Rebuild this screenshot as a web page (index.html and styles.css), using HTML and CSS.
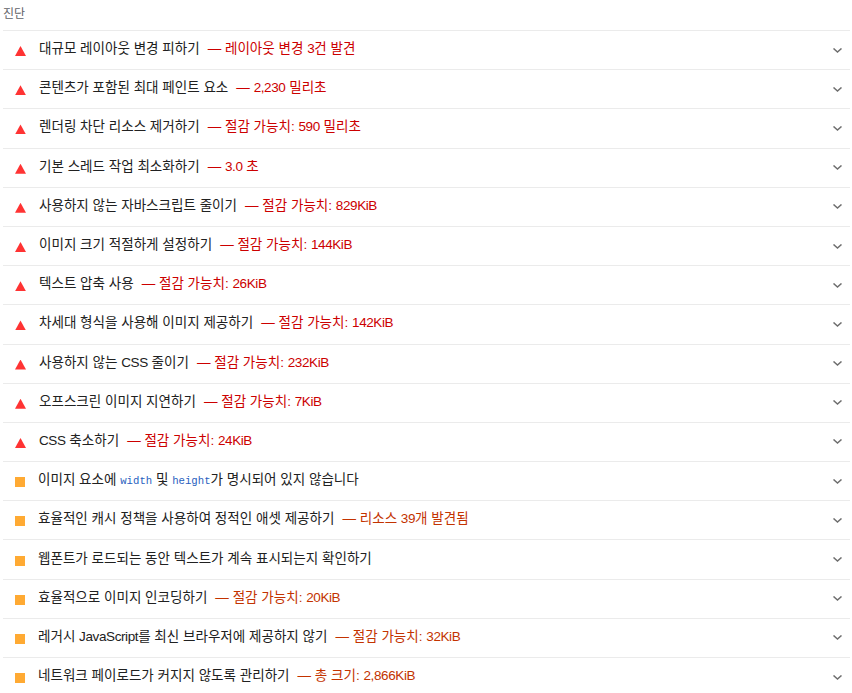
FILE: index.html
```html
<!DOCTYPE html>
<html lang="ko">
<head>
  <meta charset="UTF-8">
  <title>진단</title>
  <link rel="stylesheet" href="styles.css">
</head>
<body>

<div class="group-title">진단</div>

<div class="audit fail">
  <span class="icon"></span>
  <span class="title">대규모 레이아웃 변경 피하기</span>
  <span class="display">— 레이아웃 변경 <span class="en">3</span>건 발견</span>
  <svg class="chevron" viewBox="0 0 9 5"><path d="M.5.5 4.500 4l4-3.500"/></svg>
</div>
<div class="audit fail">
  <span class="icon"></span>
  <span class="title">콘텐츠가 포함된 최대 페인트 요소</span>
  <span class="display">— <span class="en">2,230</span> 밀리초</span>
  <svg class="chevron" viewBox="0 0 9 5"><path d="M.5.5 4.500 4l4-3.500"/></svg>
</div>
<div class="audit fail">
  <span class="icon"></span>
  <span class="title">렌더링 차단 리소스 제거하기</span>
  <span class="display">— 절감 가능치: <span class="en">590</span> 밀리초</span>
  <svg class="chevron" viewBox="0 0 9 5"><path d="M.5.5 4.500 4l4-3.500"/></svg>
</div>
<div class="audit fail">
  <span class="icon"></span>
  <span class="title">기본 스레드 작업 최소화하기</span>
  <span class="display">— <span class="en">3.0</span> 초</span>
  <svg class="chevron" viewBox="0 0 9 5"><path d="M.5.5 4.500 4l4-3.500"/></svg>
</div>
<div class="audit fail">
  <span class="icon"></span>
  <span class="title">사용하지 않는 자바스크립트 줄이기</span>
  <span class="display">— 절감 가능치: <span class="en">829KiB</span></span>
  <svg class="chevron" viewBox="0 0 9 5"><path d="M.5.5 4.500 4l4-3.500"/></svg>
</div>
<div class="audit fail">
  <span class="icon"></span>
  <span class="title">이미지 크기 적절하게 설정하기</span>
  <span class="display">— 절감 가능치: <span class="en">144KiB</span></span>
  <svg class="chevron" viewBox="0 0 9 5"><path d="M.5.5 4.500 4l4-3.500"/></svg>
</div>
<div class="audit fail">
  <span class="icon"></span>
  <span class="title">텍스트 압축 사용</span>
  <span class="display">— 절감 가능치: <span class="en">26KiB</span></span>
  <svg class="chevron" viewBox="0 0 9 5"><path d="M.5.5 4.500 4l4-3.500"/></svg>
</div>
<div class="audit fail">
  <span class="icon"></span>
  <span class="title">차세대 형식을 사용해 이미지 제공하기</span>
  <span class="display">— 절감 가능치: <span class="en">142KiB</span></span>
  <svg class="chevron" viewBox="0 0 9 5"><path d="M.5.5 4.500 4l4-3.500"/></svg>
</div>
<div class="audit fail">
  <span class="icon"></span>
  <span class="title">사용하지 않는 <span class="en">CSS</span> 줄이기</span>
  <span class="display">— 절감 가능치: <span class="en">232KiB</span></span>
  <svg class="chevron" viewBox="0 0 9 5"><path d="M.5.5 4.500 4l4-3.500"/></svg>
</div>
<div class="audit fail">
  <span class="icon"></span>
  <span class="title">오프스크린 이미지 지연하기</span>
  <span class="display">— 절감 가능치: <span class="en">7KiB</span></span>
  <svg class="chevron" viewBox="0 0 9 5"><path d="M.5.5 4.500 4l4-3.500"/></svg>
</div>
<div class="audit fail">
  <span class="icon"></span>
  <span class="title"><span class="en">CSS</span> 축소하기</span>
  <span class="display">— 절감 가능치: <span class="en">24KiB</span></span>
  <svg class="chevron" viewBox="0 0 9 5"><path d="M.5.5 4.500 4l4-3.500"/></svg>
</div>

<div class="audit average">
  <span class="icon"></span>
  <span class="title">이미지 요소에 <code>width</code> 및 <code>height</code>가 명시되어 있지 않습니다</span>
  <svg class="chevron" viewBox="0 0 9 5"><path d="M.5.5 4.500 4l4-3.500"/></svg>
</div>
<div class="audit average">
  <span class="icon"></span>
  <span class="title">효율적인 캐시 정책을 사용하여 정적인 애셋 제공하기</span>
  <span class="display">— 리소스 <span class="en">39</span>개 발견됨</span>
  <svg class="chevron" viewBox="0 0 9 5"><path d="M.5.5 4.500 4l4-3.500"/></svg>
</div>
<div class="audit average">
  <span class="icon"></span>
  <span class="title">웹폰트가 로드되는 동안 텍스트가 계속 표시되는지 확인하기</span>
  <svg class="chevron" viewBox="0 0 9 5"><path d="M.5.5 4.500 4l4-3.500"/></svg>
</div>
<div class="audit average">
  <span class="icon"></span>
  <span class="title">효율적으로 이미지 인코딩하기</span>
  <span class="display">— 절감 가능치: <span class="en">20KiB</span></span>
  <svg class="chevron" viewBox="0 0 9 5"><path d="M.5.5 4.500 4l4-3.500"/></svg>
</div>
<div class="audit average">
  <span class="icon"></span>
  <span class="title">레거시 <span class="en">JavaScript</span>를 최신 브라우저에 제공하지 않기</span>
  <span class="display">— 절감 가능치: <span class="en">32KiB</span></span>
  <svg class="chevron" viewBox="0 0 9 5"><path d="M.5.5 4.500 4l4-3.500"/></svg>
</div>
<div class="audit average">
  <span class="icon"></span>
  <span class="title">네트워크 페이로드가 커지지 않도록 관리하기</span>
  <span class="display">— 총 크기: <span class="en">2,866KiB</span></span>
  <svg class="chevron" viewBox="0 0 9 5"><path d="M.5.5 4.500 4l4-3.500"/></svg>
</div>

</body>
</html>
```

FILE: styles.css
```css
body {
  margin: 0;
  padding: 0 2px 0 3px;
  height: 693px;
  overflow: hidden;
  background: #fff;
  font-family: "Liberation Sans", "Noto Sans CJK KR", sans-serif;
  font-size: 13.54px;
  color: #212121;
}

.group-title {
  height: 30px;
  padding-top: 7px;
  box-sizing: border-box;
  font-size: 12px;
  line-height: 14px;
  color: #5f6368;
}

.audit {
  display: flex;
  align-items: center;
  height: 39.19px;
  box-sizing: border-box;
  border-top: 1px solid #ebebeb;
}

.icon {
  flex: none;
  width: 11px;
  height: 10px;
  margin: 2px 13px 0 12px;
}

.fail .icon {
  background: #ff3333;
  clip-path: polygon(50% 0, 100% 100%, 0 100%);
}

.average .icon {
  width: 10px;
  height: 10px;
  margin: 2px 13px 0 12px;
  background: #ffaa33;
}

.title {
  line-height: 20px;
  margin-bottom: 2px;
}

.display {
  margin-left: 8px;
  line-height: 20px;
  margin-bottom: 2px;
}

.fail .display {
  color: #cc0000;
}

.average .display {
  color: #c33300;
}

.en {
  font-size: 13.5px;
  letter-spacing: -0.4px;
}

code {
  font-family: "Liberation Mono", monospace;
  font-size: 10.67px;
  color: #2a5fc0;
}

.chevron {
  flex: none;
  width: 9px;
  height: 5px;
  margin-left: auto;
  margin-right: 8px;
  fill: none;
  stroke: #6e6e6e;
  stroke-width: 1.5;
}
```
